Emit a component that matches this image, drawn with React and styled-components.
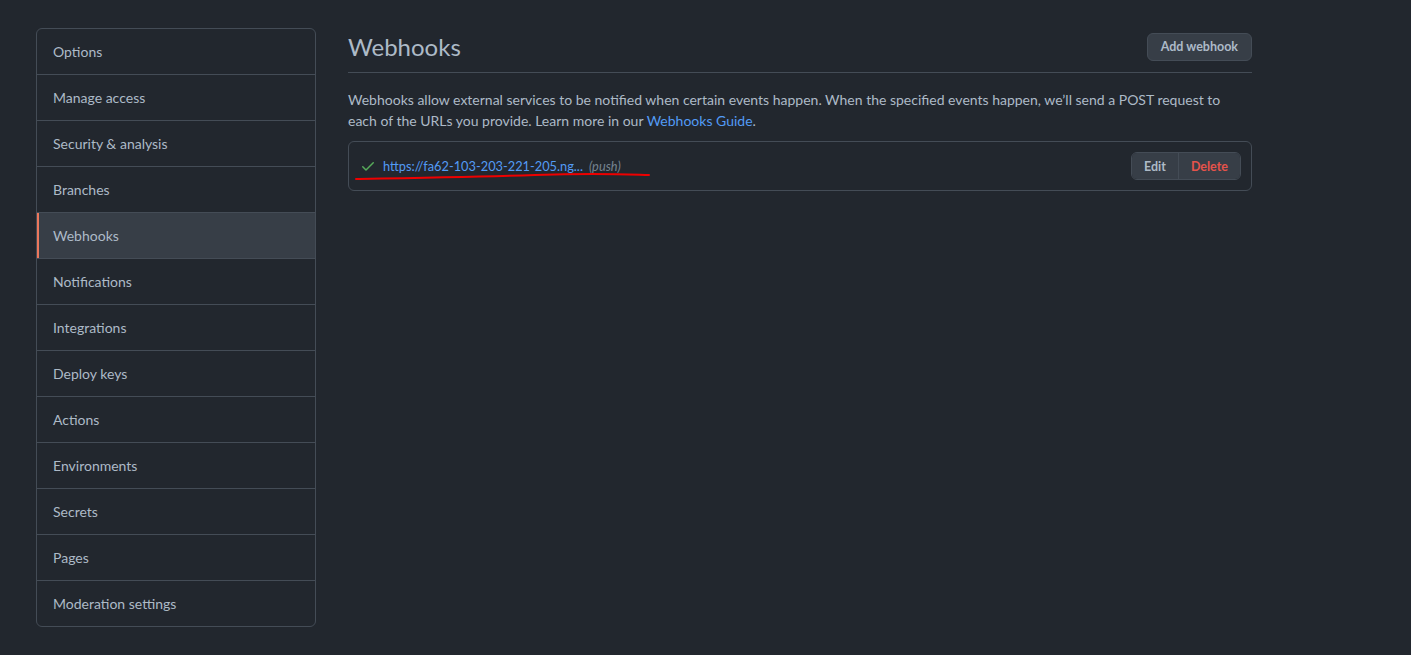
import styled, { createGlobalStyle } from "styled-components";

const GlobalStyle = createGlobalStyle`
  html, body {
    margin: 0;
    background: #22272e;
  }
  body {
    font-family: Lato, "Noto Sans", "Liberation Sans", sans-serif;
    color: #adbac7;
  }
  * {
    box-sizing: border-box;
  }
`;

const menuItems = [
  "Options",
  "Manage access",
  "Security & analysis",
  "Branches",
  "Webhooks",
  "Notifications",
  "Integrations",
  "Deploy keys",
  "Actions",
  "Environments",
  "Secrets",
  "Pages",
  "Moderation settings",
];

const CheckIcon = () => (
  <svg width="16" height="16" viewBox="0 0 16 16" fill="#57ab5a">
    <path d="M13.78 4.22a.75.75 0 010 1.06l-7.25 7.25a.75.75 0 01-1.06 0L2.22 9.28a.75.75 0 011.06-1.06L6 10.94l6.72-6.72a.75.75 0 011.06 0z" />
  </svg>
);

const App = () => {
  return (
    <>
      <GlobalStyle />
      <Page>
        <Sidebar>
          {menuItems.map((label) => (
            <MenuItem key={label} $selected={label === "Webhooks"}>
              {label}
            </MenuItem>
          ))}
        </Sidebar>

        <Main>
          <Header>
            <Title>Webhooks</Title>
            <Button>Add webhook</Button>
          </Header>

          <Description>
            Webhooks allow external services to be notified when certain events
            happen. When the specified events happen, we’ll send a POST request
            to each of the URLs you provide. Learn more in our{" "}
            <Link href="#">Webhooks Guide</Link>.
          </Description>

          <HookBox>
            <HookInfo>
              <CheckIcon />
              <HookUrl href="#">https://fa62-103-203-221-205.ng...</HookUrl>
              <HookEvents>(push)</HookEvents>
              {/* hand-drawn annotation under the url */}
              <Scribble width="296" height="10" viewBox="0 0 296 10">
                <path
                  d="M1 8 C 60 7, 120 6, 180 4 S 260 3, 294 4"
                  stroke="#e00"
                  strokeWidth="2"
                  fill="none"
                  strokeLinecap="round"
                />
              </Scribble>
            </HookInfo>
            <ButtonGroup>
              <GroupButton>Edit</GroupButton>
              <GroupButton $danger>Delete</GroupButton>
            </ButtonGroup>
          </HookBox>
        </Main>
      </Page>
    </>
  );
};

// Styled components
const Page = styled.div`
  display: flex;
  align-items: flex-start;
  gap: 32px;
  padding: 28px 36px;
`;

const Sidebar = styled.nav`
  width: 280px;
  flex-shrink: 0;
  border: 1px solid #444c56;
  border-radius: 6px;
  overflow: hidden;
`;

const MenuItem = styled.div`
  height: 46px;
  display: flex;
  align-items: center;
  padding: 0 16px;
  font-size: 14px;
  color: #adbac7;
  background: ${(p) => (p.$selected ? "#373e47" : "transparent")};
  box-shadow: ${(p) => (p.$selected ? "inset 2px 0 0 #ec775c" : "none")};
  border-top: 1px solid #444c56;

  &:first-child {
    border-top: none;
    height: 45px;
  }
`;

const Main = styled.main`
  width: 904px;
`;

const Header = styled.div`
  display: flex;
  align-items: center;
  justify-content: space-between;
  padding: 4px 0 11px;
  border-bottom: 1px solid #444c56;
`;

const Title = styled.h2`
  margin: 0;
  font-size: 24px;
  font-weight: 400;
  line-height: 29px;
  color: #adbac7;
`;

const Button = styled.button`
  height: 28px;
  padding: 0 13px;
  font-family: inherit;
  font-size: 12.5px;
  font-weight: 700;
  color: #adbac7;
  background: #373e47;
  border: 1px solid #444c56;
  border-radius: 6px;
`;

const Description = styled.p`
  margin: 16px 0 10px;
  font-size: 14px;
  line-height: 21px;
  color: #adbac7;
`;

const Link = styled.a`
  color: #539bf5;
  text-decoration: none;
`;

const HookBox = styled.div`
  display: flex;
  align-items: center;
  justify-content: space-between;
  height: 50px;
  padding: 0 10px 0 11px;
  border: 1px solid #444c56;
  border-radius: 6px;
`;

const HookInfo = styled.div`
  position: relative;
  display: flex;
  align-items: center;
  gap: 6px;
  font-size: 12.8px;
`;

const HookUrl = styled.a`
  color: #539bf5;
  text-decoration: none;
  margin-left: 1px;
`;

const HookEvents = styled.span`
  color: #768390;
  font-style: italic;
`;

const Scribble = styled.svg`
  position: absolute;
  left: -5px;
  top: 13px;
`;

const ButtonGroup = styled.div`
  display: flex;
  border: 1px solid #444c56;
  border-radius: 6px;
  overflow: hidden;
`;

const GroupButton = styled.button`
  height: 26px;
  padding: 0 12px;
  font-family: inherit;
  font-size: 12.5px;
  font-weight: 700;
  color: ${(p) => (p.$danger ? "#e5534b" : "#adbac7")};
  background: #373e47;
  border: none;
  border-left: ${(p) => (p.$danger ? "1px solid #444c56" : "none")};
`;

export default App;
